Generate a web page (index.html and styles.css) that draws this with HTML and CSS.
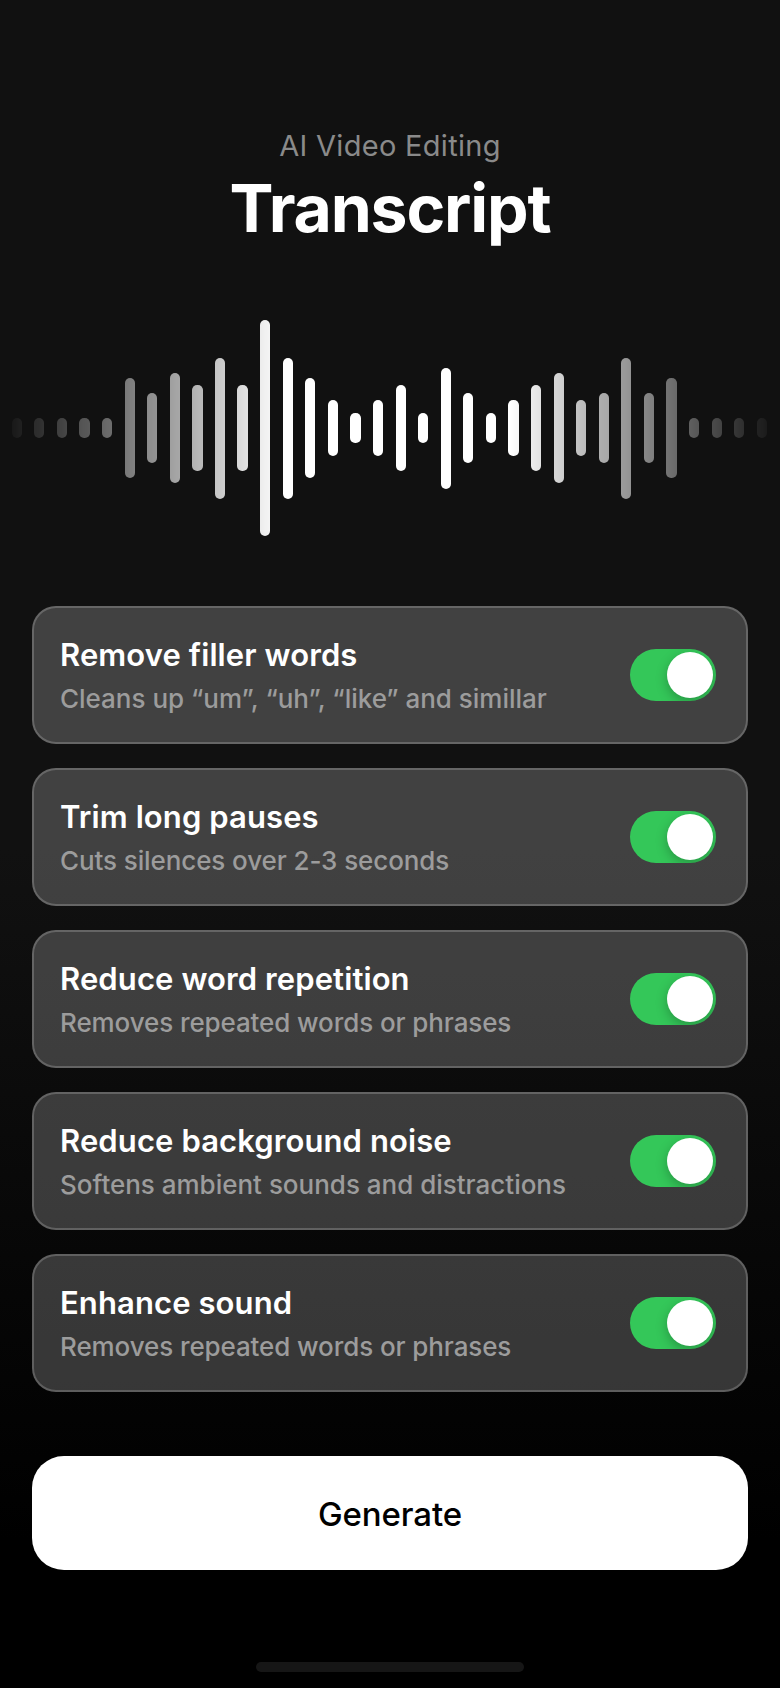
FILE: index.html
```html
<!DOCTYPE html>
<html lang="en">
<head>
<meta charset="utf-8">
<title>Transcript</title>
<link rel="stylesheet" href="styles.css">
</head>
<body>
<main class="screen">
  <header class="header">
    <p class="eyebrow">AI Video Editing</p>
    <h1 class="title">Transcript</h1>
  </header>
  <div class="wave" aria-hidden="true">
    <i class="h20"></i><i class="h20"></i><i class="h20"></i><i class="h20"></i><i class="h20"></i><i class="h100"></i><i class="h70"></i><i class="h110"></i><i class="h86"></i><i class="h141"></i><i class="h86"></i><i class="h216"></i><i class="h141"></i><i class="h100"></i><i class="h56"></i><i class="h30"></i><i class="h56"></i><i class="h86"></i><i class="h30"></i><i class="h121"></i><i class="h70"></i><i class="h30"></i><i class="h56"></i><i class="h86"></i><i class="h110"></i><i class="h56"></i><i class="h70"></i><i class="h141"></i><i class="h70"></i><i class="h100"></i><i class="h20"></i><i class="h20"></i><i class="h20"></i><i class="h20"></i>
  </div>
  <section class="options">
    <div class="card"><div class="copy"><h2 class="name">Remove filler words</h2><p class="desc loose">Cleans up “um”, “uh”, “like” and simillar</p></div><span class="toggle"><span class="knob"></span></span></div>
    <div class="card"><div class="copy"><h2 class="name">Trim long pauses</h2><p class="desc">Cuts silences over 2-3 seconds</p></div><span class="toggle"><span class="knob"></span></span></div>
    <div class="card"><div class="copy"><h2 class="name">Reduce word repetition</h2><p class="desc">Removes repeated words or phrases</p></div><span class="toggle"><span class="knob"></span></span></div>
    <div class="card"><div class="copy"><h2 class="name">Reduce background noise</h2><p class="desc loose">Softens ambient sounds and distractions</p></div><span class="toggle"><span class="knob"></span></span></div>
    <div class="card"><div class="copy"><h2 class="name">Enhance sound</h2><p class="desc">Removes repeated words or phrases</p></div><span class="toggle"><span class="knob"></span></span></div>
  </section>
  <button class="generate">Generate</button>
  <div class="home"></div>
</main>
</body>
</html>
```
FILE: styles.css
```css
* { box-sizing: border-box; margin: 0; padding: 0; }
body { background: #000; font-family: Inter, "Liberation Sans", sans-serif; color: #fff; }
.screen {
  width: 780px;
  height: 1688px;
  overflow: hidden;
  display: flex;
  flex-direction: column;
  align-items: center;
  padding-top: 126px;
  background: linear-gradient(#111 0, #111 850px, #000 1540px);
}
.header { text-align: center; height: 194px; }
.eyebrow { font-size: 29px; line-height: 40px; letter-spacing: 0.3px; color: #8a8a8a; }
.title { font-size: 66px; line-height: 84px; font-weight: 700; letter-spacing: -1.15px; }
.wave {
  width: 780px;
  height: 216px;
  padding: 0 13px 0 11.7px;
  display: flex;
  justify-content: space-between;
  align-items: center;
  -webkit-mask-image: linear-gradient(90deg, transparent 3px, #000 282px, #000 509px, transparent 778px);
  mask-image: linear-gradient(90deg, transparent 3px, #000 282px, #000 509px, transparent 778px);
}
.wave i { width: 10.2px; border-radius: 5.1px; background: #fff; }
.h20 { height: 20px; }
.h30 { height: 30px; }
.h56 { height: 56px; }
.h70 { height: 70px; }
.h86 { height: 86px; }
.h100 { height: 100px; }
.h110 { height: 110px; }
.h121 { height: 121px; }
.h141 { height: 141px; }
.h216 { height: 216px; }
.options { width: 716px; margin-top: 70px; display: flex; flex-direction: column; gap: 24px; }
.card {
  height: 138px;
  padding: 0 30px 0 26px;
  display: flex;
  align-items: center;
  justify-content: space-between;
  border: 2px solid rgba(255, 255, 255, 0.2);
  border-radius: 24px;
  background: rgba(255, 255, 255, 0.204);
}
.copy { padding-top: 4px; white-space: nowrap; }
.name { font-size: 31px; line-height: 44px; font-weight: 600; letter-spacing: 0.1px; }
.desc { font-size: 26px; line-height: 44px; font-weight: 500; letter-spacing: -0.1px; color: #9c9c9c; }
.loose { letter-spacing: -0.01px; }
.toggle {
  width: 86px;
  height: 52px;
  padding: 3px;
  display: flex;
  justify-content: flex-end;
  overflow: hidden;
  border-radius: 26px;
  background: #34c759;
}
.knob { width: 46px; height: 46px; border-radius: 50%; background: #fff; box-shadow: 0 4px 12px rgba(0, 0, 0, 0.25); }
.generate {
  width: 716px;
  height: 114px;
  margin-top: 64px;
  padding-top: 2px;
  border: 0;
  border-radius: 32px;
  background: #fff;
  color: #000;
  font: 500 33px/44px Inter, "Liberation Sans", sans-serif;
  letter-spacing: -0.1px;
}
.home { width: 268px; height: 10px; margin-top: 92px; border-radius: 5px; background: #161616; }
```
